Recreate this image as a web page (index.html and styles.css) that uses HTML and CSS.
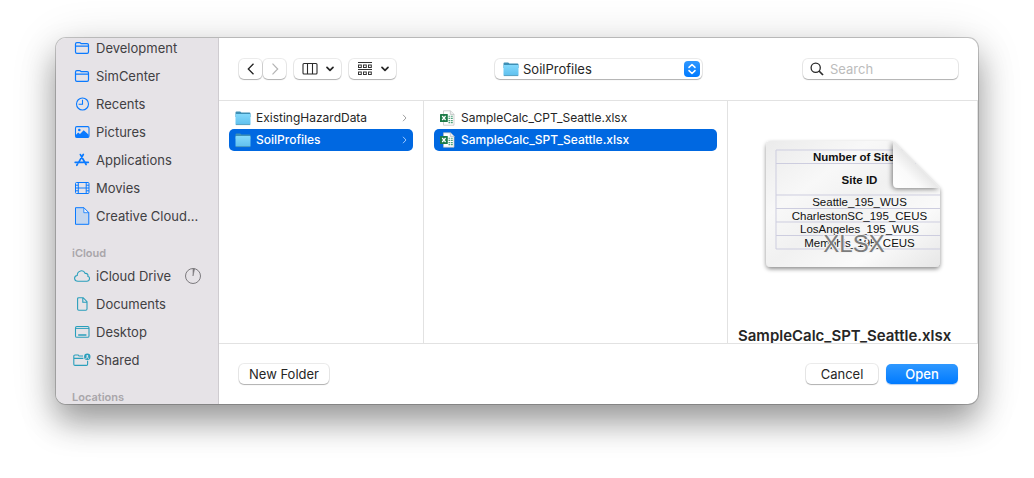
FILE: index.html
```html
<!DOCTYPE html>
<html lang="en">
<head>
<meta charset="utf-8">
<title>Open</title>
<link rel="stylesheet" href="styles.css">
</head>
<body>
<svg class="defs" width="0" height="0" aria-hidden="true">
  <defs>
    <linearGradient id="folderFill" x1="0" y1="0" x2="0" y2="1"><stop offset="0" stop-color="#82d8fb"/><stop offset="1" stop-color="#5fc0ee"/></linearGradient>
    <symbol id="folder" viewBox="0 0 16 16">
      <path d="M.5 2.600q0-1.100 1.100-1.100h3.600l1.200 1h8q1.100 0 1.100 1V7H.5z" fill="#3d8fb5"/>
      <rect x=".5" y="4" width="15" height="10.800" rx=".8" fill="url(#folderFill)"/>
      <path d="M.8 14.600h14.400" stroke="#4b93b3" stroke-width=".8"/>
    </symbol>
    <symbol id="outline-folder" viewBox="0 0 16 14">
      <path d="M1.500 11V3q0-1.400 1.400-1.400h2.600q.6 0 1 .4l.6.6h6q1.400 0 1.400 1.400v7q0 1.400-1.400 1.400H2.900Q1.500 12.400 1.500 11zM1.500 5.200h13" fill="none" stroke="currentColor" stroke-width="1.200"/>
    </symbol>
    <symbol id="excel" viewBox="0 0 16 16">
      <path d="M3.500.8h7L14 4.300v10.900H3.500z" fill="#fff" stroke="#b9bcbc" stroke-width=".7"/>
      <path d="M10.300.8v3.700H14" fill="#eee" stroke="#b9bcbc" stroke-width=".7"/>
      <path d="M8.500 6.200h1.800M11 6.200h1.800M8.500 8.400h1.800M11 8.400h1.800M8.500 10.600h1.800M11 10.600h1.800M8.500 12.600h1.800M11 12.600h1.800" stroke="#4ea27b" stroke-width="1.100"/>
      <rect x="0" y="4" width="7.800" height="8" rx=".6" fill="#1d7b48"/>
      <path d="M2.200 6l3.400 4M5.600 6l-3.400 4" stroke="#fff" stroke-width="1.200"/>
    </symbol>
    <symbol id="chevron-down" viewBox="0 0 8 6"><path d="M1 1.300l3 3 3-3" fill="none" stroke="currentColor" stroke-width="1.700" stroke-linecap="round" stroke-linejoin="round"/></symbol>
    <symbol id="chevron-right" viewBox="0 0 5 8"><path d="M1 .8L4 4 1 7.200" fill="none" stroke="currentColor" stroke-width="1"/></symbol>
  </defs>
</svg>
<main class="dialog">
  <nav class="sidebar" aria-label="Favorites">
    <ul class="places">
      <li><a class="place" href="#"><svg class="place-icon"><use href="#outline-folder"/></svg>Development</a></li>
      <li><a class="place" href="#"><svg class="place-icon"><use href="#outline-folder"/></svg>SimCenter</a></li>
      <li><a class="place" href="#"><svg class="place-icon" viewBox="0 0 16 14"><g fill="none" stroke="currentColor" stroke-width="1.100"><circle cx="8.500" cy="7" r="6"/><path d="M8.500 2.800V7.200H4.600"/></g></svg>Recents</a></li>
      <li><a class="place" href="#"><svg class="place-icon" viewBox="0 0 16 14"><rect x="1.500" y="1.600" width="13.500" height="10.800" rx="1.300" fill="none" stroke="currentColor" stroke-width="1.100"/><circle cx="5.300" cy="5" r="1.300" fill="currentColor"/><path d="M1.800 10l2.400-2.400 1.800 1.500 3.700-3.900 5 4.500v2.500H1.800z" fill="currentColor"/></svg>Pictures</a></li>
      <li><a class="place" href="#"><svg class="place-icon" viewBox="0 0 16 14"><path d="M6.400 1.600l.9 1.500M9.300 1.500L4.300 9.900M7.300 3.200l4.800 8.300M1.200 9.300h8.200M11.500 9.300h2.800M3.400 11.300l-.6 1" fill="none" stroke="currentColor" stroke-width="1.700" stroke-linecap="round"/></svg>Applications</a></li>
      <li><a class="place" href="#"><svg class="place-icon" viewBox="0 0 16 14"><g fill="none" stroke="currentColor" stroke-width="1"><rect x="1.500" y="1.500" width="13.500" height="11" rx="1"/><path d="M4.300 1.500v11M12.200 1.500v11M4.300 7h7.900"/><path d="M1.500 4.200h2.800M1.500 7h2.800M1.500 9.800h2.800M12.200 4.200H15M12.200 7H15M12.200 9.800H15"/></g></svg>Movies</a></li>
      <li><a class="place" href="#"><svg class="place-icon tall" viewBox="0 0 16 18"><path d="M1.500.7h8.300l5 5v11.600H1.500z" fill="#c3d6ef" stroke="currentColor" stroke-width="1"/><path d="M9.800.7v5h5z" fill="#edf2f9" stroke="currentColor" stroke-width=".8"/></svg>Creative Cloud...</a></li>
    </ul>
    <h2 class="group">iCloud</h2>
    <ul class="places cloud">
      <li><a class="place" href="#"><svg class="place-icon" viewBox="0 0 16 14"><path d="M4 12.200C-.4 12.200-.4 6.900 3.200 6.500 3.300 1.400 9.500.2 11.100 4.400c2.400-.3 3.200 1.500 2.700 2.800 2.600.7 2.100 5-.9 5z" fill="none" stroke="currentColor" stroke-width="1.100"/></svg>iCloud Drive<svg class="progress" viewBox="0 0 18 18"><circle cx="9" cy="9" r="7.500" fill="none" stroke="#7c7a7e"/><path d="M9 9V1.500q1 0 1.600.2z" fill="#7c7a7e" stroke="#7c7a7e" stroke-width=".6"/></svg></a></li>
      <li><a class="place" href="#"><svg class="place-icon" viewBox="0 0 16 14"><path d="M4.800.7h4.400l3.800 4v7.400q0 1.200-1.200 1.200h-7q-1.200 0-1.200-1.200V1.900Q3.600.7 4.800.7zM8.800.9v4.300h4" fill="none" stroke="currentColor" stroke-width="1.100"/></svg>Documents</a></li>
      <li><a class="place" href="#"><svg class="place-icon" viewBox="0 0 16 14"><rect x="1.500" y="1.500" width="13.500" height="10.800" rx="1.400" fill="none" stroke="currentColor" stroke-width="1.100"/><path d="M1.500 3.400H15" stroke="currentColor"/><path d="M4.200 10h8.200" stroke="currentColor" stroke-width="1.700"/></svg>Desktop</a></li>
      <li><a class="place" href="#"><svg class="place-icon wide" viewBox="0 0 18 14"><path d="M10 3H6L5.200 2H2Q.8 2 .8 3.200v8q0 1.200 1.200 1.200h11.400q1.200 0 1.200-1.200V7.800M.8 5.400h9.600" fill="none" stroke="currentColor" stroke-width="1.100"/><circle cx="14.300" cy="3.700" r="3.200" fill="currentColor"/><circle cx="14.300" cy="2.900" r="1" fill="#e6e3e7"/><path d="M12.500 5.500q1.800-2 3.600 0" fill="none" stroke="#e6e3e7"/></svg>Shared</a></li>
    </ul>
    <h2 class="group">Locations</h2>
  </nav>
  <section class="content">
    <header class="toolbar">
      <div class="tools">
        <div class="history">
          <button class="control nav" aria-label="Back"><svg width="8" height="14" viewBox="0 0 8 14"><path d="M6.500 1.700L1.300 7l5.200 5.300" fill="none" stroke="#222" stroke-width="1.300"/></svg></button>
          <button class="control nav" aria-label="Forward" disabled><svg width="8" height="14" viewBox="0 0 8 14"><path d="M1.500 1.700L6.700 7l-5.200 5.300" fill="none" stroke="#b4b4b4" stroke-width="1.200"/></svg></button>
        </div>
        <button class="control view" aria-label="Column view"><svg width="16" height="14" viewBox="0 0 16 14"><path d="M2 1.500h12q1 0 1 1v8.500q0 1-1 1H2q-1 0-1-1V2.500q0-1 1-1zM5.500 1.500V12M10.500 1.500V12" fill="none" stroke="#2b2b2b" stroke-width="1.100"/></svg><svg width="8" height="6"><use href="#chevron-down"/></svg></button>
        <button class="control view" aria-label="Group by"><svg width="16" height="16" viewBox="0 0 16 16" fill="none" stroke="#333"><path d="M1 1.500h14M1 8.500h14"/><rect x="1.500" y="4" width="2.800" height="2.500"/><rect x="6.500" y="4" width="2.800" height="2.500"/><rect x="11.500" y="4" width="2.800" height="2.500"/><rect x="1.500" y="11" width="2.800" height="2.500"/><rect x="6.500" y="11" width="2.800" height="2.500"/><rect x="11.500" y="11" width="2.800" height="2.500"/></svg><svg width="8" height="6"><use href="#chevron-down"/></svg></button>
      </div>
      <div class="control location">
        <svg width="16" height="16"><use href="#folder"/></svg>
        <select class="location-select" aria-label="Location"><option>SoilProfiles</option></select>
        <svg class="stepper" viewBox="0 0 16 16"><path d="M5 6.400l3-2.900 3 2.900M5 9.600l3 2.900 3-2.900" fill="none" stroke="#fff" stroke-width="1.500" stroke-linecap="round" stroke-linejoin="round"/></svg>
      </div>
      <label class="control search"><svg width="14" height="14" viewBox="0 0 14 14"><circle cx="5.700" cy="5.700" r="4.600" fill="none" stroke="#2b2b2b" stroke-width="1.300"/><path d="M9 9l4 4" stroke="#2b2b2b" stroke-width="1.700"/></svg><input class="search-input" type="text" placeholder="Search" aria-label="Search"></label>
    </header>
    <div class="browser">
      <ul class="column folders">
        <li><button class="row"><svg width="16" height="16"><use href="#folder"/></svg><span class="name">ExistingHazardData</span><svg class="more" width="5" height="8"><use href="#chevron-right"/></svg></button></li>
        <li><button class="row selected"><svg width="16" height="16"><use href="#folder"/></svg><span class="name">SoilProfiles</span><svg class="more" width="5" height="8"><use href="#chevron-right"/></svg></button></li>
      </ul>
      <ul class="column files">
        <li><button class="row"><svg width="16" height="16"><use href="#excel"/></svg><span class="name">SampleCalc_CPT_Seattle.xlsx</span></button></li>
        <li><button class="row selected"><svg width="16" height="16"><use href="#excel"/></svg><span class="name">SampleCalc_SPT_Seattle.xlsx</span></button></li>
      </ul>
      <section class="column preview">
        <svg class="thumbnail" viewBox="0 0 380 288">
          <defs>
            <linearGradient id="paper" x1="0" y1="0" x2="1" y2="1"><stop offset="0" stop-color="#ebebeb"/><stop offset=".3" stop-color="#f8f8f8"/><stop offset=".5" stop-color="#f1f1f1"/><stop offset=".75" stop-color="#fafafa"/><stop offset="1" stop-color="#e6e6e6"/></linearGradient>
            <linearGradient id="curl" x1="0" y1="1" x2=".6" y2=".4"><stop offset="0" stop-color="#fff"/><stop offset=".5" stop-color="#fafafa"/><stop offset="1" stop-color="#dedede"/></linearGradient>
            <filter id="lift" x="-10%" y="-10%" width="120%" height="125%"><feDropShadow dx="0" dy="4" stdDeviation="4" flood-opacity=".45"/></filter>
            <filter id="fold" x="-30%" y="-30%" width="160%" height="160%"><feDropShadow dx="-2" dy="2" stdDeviation="5" flood-opacity=".5"/></filter>
            <clipPath id="sheet"><path d="M24 8h244l94 94v148q0 10-10 10H24q-10 0-10-10V18q0-10 10-10z"/></clipPath>
          </defs>
          <path d="M24 8h244l94 94v148q0 10-10 10H24q-10 0-10-10V18q0-10 10-10z" fill="url(#paper)" filter="url(#lift)"/>
          <g clip-path="url(#sheet)">
            <path d="M362 26H34v198h328M362 53H34M362 116H34M362 143H34M362 170H34M362 197H34" fill="none" stroke="#cdcddf" stroke-width="2"/>
            <g class="cells" text-anchor="middle">
              <g class="cells-head"><text x="196" y="48">Number of Sites</text><text x="201" y="94">Site ID</text></g>
              <text x="201" y="138">Seattle_195_WUS</text>
              <text x="201" y="165">CharlestonSC_195_CEUS</text>
              <text x="201" y="192">LosAngeles_195_WUS</text>
              <text x="201" y="219">Memphis_195_CEUS</text>
            </g>
            <path d="M268 8v84q0 10 10 10h84z" fill="url(#curl)" filter="url(#fold)"/>
          </g>
          <text class="kind" x="190" y="229" text-anchor="middle">XLSX</text>
        </svg>
        <h1 class="preview-name">SampleCalc_SPT_Seattle.xlsx</h1>
      </section>
    </div>
    <footer class="actions">
      <button class="control action">New Folder</button>
      <span class="spacer"></span>
      <button class="control action cancel">Cancel</button>
      <button class="control action primary">Open</button>
    </footer>
  </section>
</main>
</body>
</html>
```
FILE: styles.css
```css
* { box-sizing: border-box; }
body {
  margin: 0;
  height: 100vh;
  padding: 38px 56px 74px;
  background: #fff;
  color: #262626;
  font: 13px/16px Inter, "Liberation Sans", sans-serif;
  overflow: hidden;
}
ul { list-style: none; margin: 0; padding: 0; }
button, input, select { font: inherit; color: inherit; }
svg { flex: none; display: block; }
.defs { position: absolute; }
.dialog {
  display: flex;
  height: 100%;
  border-radius: 10px;
  overflow: hidden;
  background: #fff;
  box-shadow: 0 0 0 1px rgba(0, 0, 0, .2), 0 18px 32px rgba(0, 0, 0, .34), 0 6px 48px rgba(0, 0, 0, .14);
}
.sidebar {
  flex: none;
  width: 163px;
  background: #e6e3e7;
  border-right: 1px solid #cfccd0;
  overflow: hidden;
}
.places { color: #0a7aff; }
.places:first-child { margin-top: -4px; }
.cloud { color: #2a9fbc; }
.place {
  display: flex;
  align-items: center;
  height: 28px;
  padding: 0 16px 0 18px;
  gap: 6px;
  color: inherit;
  text-decoration: none;
  white-space: nowrap;
  -webkit-text-fill-color: #414043;
}
.place-icon { width: 16px; height: 14px; }
.place-icon.tall { height: 18px; }
.place-icon.wide { width: 18px; margin: 0 -1px; }
.progress { width: 18px; height: 18px; margin-left: auto; }
.group {
  height: 18px;
  margin: 14px 0 0;
  padding-left: 16px;
  font-size: 11px;
  line-height: 18px;
  font-weight: 600;
  color: #a9a6aa;
}
.content { flex: 1; min-width: 0; display: flex; flex-direction: column; }
.toolbar {
  display: grid;
  grid-template-columns: 1fr 207px 1fr;
  align-items: center;
  height: 63px;
  padding: 0 20px;
  border-bottom: 1px solid #e2e2e2;
}
.tools { display: flex; gap: 8px; }
.history { display: flex; gap: 1px; }
.control {
  display: flex;
  align-items: center;
  justify-content: center;
  height: 20px;
  padding: 0;
  border: 0;
  border-radius: 5px;
  background: #fff;
  box-shadow: 0 0 0 1px rgba(0, 0, 0, .08), 0 1px 1px rgba(0, 0, 0, .25);
}
.nav { width: 23px; }
.view { width: 47px; gap: 8px; }
.location { gap: 4px; padding: 0 2px 0 8px; }
.location-select {
  flex: 1;
  min-width: 0;
  height: 20px;
  padding: 0;
  border: 0;
  background: none;
  appearance: none;
  outline: 0;
}
.stepper { width: 16px; height: 16px; border-radius: 4px; background: linear-gradient(#2f98ff, #007aff); }
.search { justify-self: end; width: 155px; gap: 6px; padding: 0 7px; }
.search-input { flex: 1; min-width: 0; height: 18px; padding: 0; border: 0; outline: 0; background: none; }
.search-input::placeholder { color: #bcbcbc; opacity: 1; }
.browser { flex: 1; min-height: 0; display: flex; border-right: 1px solid #e2e2e2; }
.column { overflow: hidden; padding: 6px 10px 0; border-right: 1px solid #e2e2e2; }
.folders { width: 205px; }
.files { width: 304px; }
.row {
  display: flex;
  align-items: center;
  gap: 5px;
  width: 100%;
  height: 22px;
  padding: 0 6px;
  border: 0;
  border-radius: 5px;
  background: none;
  font-size: 12px;
  text-align: left;
}
.selected { background: #0068e1; color: #fff; font-weight: 500; }
.name { flex: 1; white-space: nowrap; }
.more { color: #a0a0a0; }
.selected .more { color: #9cc8ff; }
.preview { flex: 1; min-width: 0; padding-top: 36px; border-right: 0; }
.thumbnail { width: 190px; height: 144px; margin-left: 21px; }
.cells { font: 23px "Liberation Sans", Arial, sans-serif; fill: #111; }
.cells-head { font-weight: 700; }
.kind { font: 48px "Liberation Sans", Arial, sans-serif; fill: #7c7c7c; stroke: #f2f2f2; stroke-width: 4px; paint-order: stroke; }
.preview-name {
  margin: 45px 0 0;
  font-size: 15px;
  line-height: 20px;
  font-weight: 600;
  white-space: nowrap;
}
.actions { display: flex; align-items: center; gap: 8px; height: 61px; padding: 0 20px; border-top: 1px solid #e2e2e2; }
.spacer { flex: 1; }
.action { width: 90px; }
.cancel, .primary { width: 72px; }
.primary { background: linear-gradient(#2f98ff, #007aff); color: #fff; font-weight: 500; box-shadow: 0 1px 1px rgba(0, 90, 200, .3); }
```
